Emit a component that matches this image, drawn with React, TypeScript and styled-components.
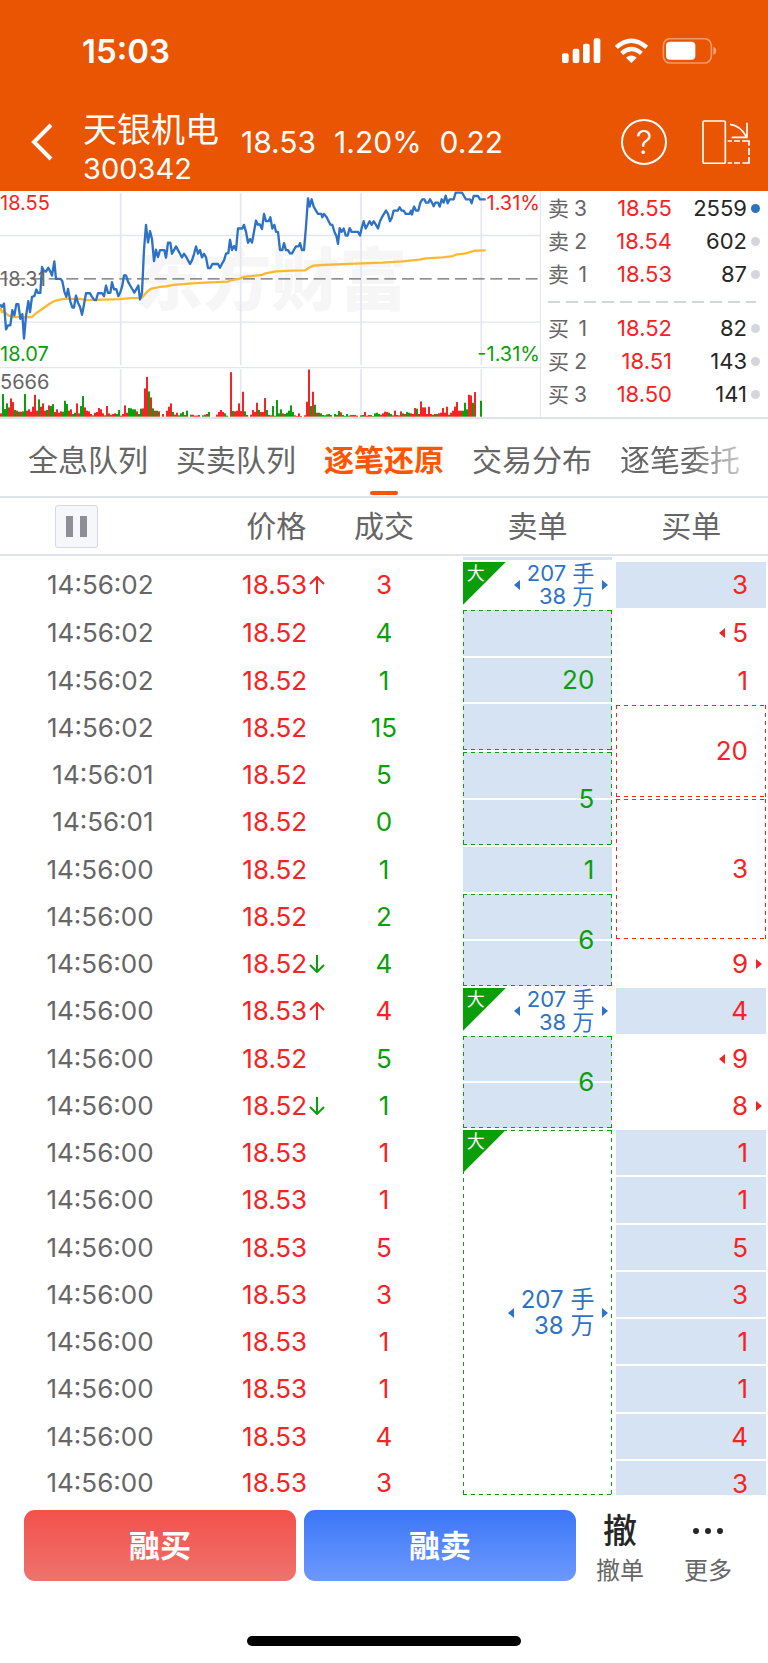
import React from "react";
import styled, { createGlobalStyle, css } from "styled-components";

const color = {
  brand: "#ea5504",
  active: "#ff5500",
  up: "#f52323",
  down: "#0a9f0a",
  blue: "#2d72c4",
  fill: "#d6e3f3",
  text: "#666666",
  dark: "#262626",
  line: "#e1e3ea",
};

const Global = createGlobalStyle`
  *, *::before, *::after { box-sizing: border-box; }
  body {
    margin: 0;
    background: #ffffff;
    color: ${color.text};
    font-family: Inter, "Noto Sans CJK SC", sans-serif;
  }
  button { font: inherit; color: inherit; background: none; border: 0; padding: 0; margin: 0; cursor: pointer; }
`;

const Page = styled.div`
  display: flex;
  flex-direction: column;
  min-height: 100vh;
`;

/* ---------- header ---------- */

const Header = styled.header`
  background: ${color.brand};
  color: #ffffff;
`;

const StatusBar = styled.div`
  display: flex;
  align-items: center;
  justify-content: space-between;
  height: 92px;
  padding: 10px 51px 0 82px;
  font-size: 33px;
  line-height: 40px;
  font-weight: 600;
`;

const NavBar = styled.nav`
  display: flex;
  align-items: center;
  height: 99px;
  padding: 0 18px 0 31px;
`;

const BackButton = styled.button`
  display: flex;
  width: 52px;
`;

const Title = styled.div`
  width: 158px;
  padding-top: 15px;
`;

const StockName = styled.h1`
  margin: 0;
  font-size: 34px;
  line-height: 40px;
  font-weight: 400;
`;

const StockCode = styled.div`
  font-size: 29px;
  line-height: 38px;
`;

const Quote = styled.div`
  display: flex;
  flex: 1;
  gap: 18px;
  font-size: 30px;
  line-height: 40px;
`;

const HelpButton = styled.button`
  width: 46px;
  height: 46px;
  margin-right: 35px;
  border: 2px solid #ffffff;
  border-radius: 50%;
  font-size: 33px;
  line-height: 40px;
  font-weight: 300;
`;

const LayoutButton = styled.button`
  display: flex;
`;

/* ---------- chart and order book ---------- */

const Market = styled.section`
  display: grid;
  grid-template-columns: minmax(0, 541fr) minmax(0, 227fr);
  border-bottom: 2px solid ${color.line};
`;

const ChartPane = styled.div`
  position: relative;
  height: 226px;
  svg { position: relative; display: block; width: 100%; height: 100%; }
`;

const Watermark = styled.span`
  position: absolute;
  left: 25%;
  top: 52px;
  font-size: 68px;
  line-height: 74px;
  font-weight: 900;
  color: #f6f6f6;
`;

const ChartLabel = styled.span<{ $top: number; $tone: string; $right?: boolean }>`
  position: absolute;
  top: ${(p) => p.$top}px;
  ${(p) => (p.$right ? "right: 1px;" : "left: 0;")}
  z-index: 1;
  font-size: 20px;
  line-height: 24px;
  color: ${(p) => p.$tone};
`;

const BookPane = styled.div`
  padding: 1px 8px 0 7px;
`;

const BookRow = styled.div`
  display: grid;
  grid-template-columns: 39px 1fr 75px 13px;
  align-items: center;
  height: 33px;
  font-size: 22px;
  line-height: 33px;
  text-align: right;
`;

const BookSide = styled.span`
  display: flex;
  justify-content: space-between;
  font-size: 21px;
`;

const BookPrice = styled.span`
  color: ${color.up};
`;

const BookVolume = styled.span`
  color: ${color.dark};
`;

const Dot = styled.i<{ $on?: boolean }>`
  justify-self: end;
  width: 9px;
  height: 9px;
  border-radius: 50%;
  background: ${(p) => (p.$on ? color.blue : "#d3d6dc")};
`;

const BookDivider = styled.div`
  display: flex;
  align-items: center;
  height: 21px;
  padding-right: 4px;
  &::before {
    content: "";
    flex: 1;
    height: 2px;
    background: repeating-linear-gradient(90deg, #d3d6dc 0 12px, transparent 12px 18px);
  }
`;

/* ---------- tabs ---------- */

const Tabs = styled.div`
  display: flex;
  gap: 28px;
  height: 79px;
  padding-left: 28px;
  border-bottom: 2px solid ${color.line};
  overflow: hidden;
`;

const Tab = styled.button<{ $active?: boolean; $fade?: boolean }>`
  position: relative;
  flex: none;
  font-size: 30px;
  line-height: 40px;
  white-space: nowrap;
  padding-top: 4px;
  ${(p) =>
    p.$active &&
    css`
      color: ${color.active};
      font-weight: 600;
      &::after {
        content: "";
        position: absolute;
        left: calc(50% - 14px);
        bottom: 1px;
        width: 28px;
        height: 4px;
        border-radius: 2px;
        background: ${color.active};
      }
    `}
  ${(p) =>
    p.$fade &&
    css`
      mask-image: linear-gradient(90deg, #000 55%, rgba(0, 0, 0, 0.35));
    `}
`;

/* ---------- tick table ---------- */

const Table = styled.table`
  width: 100%;
  table-layout: fixed;
  border-collapse: separate;
  border-spacing: 0;
  font-size: 26px;
  line-height: 26px;
`;

const Th = styled.th<{ $right?: boolean }>`
  height: 58px;
  padding: 0 1px;
  border-bottom: 2px solid ${color.line};
  font-size: 30px;
  line-height: 40px;
  font-weight: 400;
  text-align: ${(p) => (p.$right ? "right" : "center")};
`;

const PauseButton = styled.button`
  display: inline-flex;
  align-items: center;
  justify-content: center;
  gap: 7px;
  width: 43px;
  height: 43px;
  border: 1px solid #d6d9e1;
  border-radius: 3px;
  background: #f6f7fa;
  vertical-align: middle;
  &::before, &::after {
    content: "";
    width: 7px;
    height: 21px;
    background: #8e8e96;
  }
`;

const PeekRow = styled.tr`
  height: 5px;
  line-height: 0;
`;

const TickRow = styled.tr`
  height: 47px;
  &:nth-child(4n + 2), &:first-child { height: 48px; }
  &:last-child { height: 36px; line-height: 46px; }
  &:last-child > td { vertical-align: top; }
  &:last-child > td > div { height: 34px; }
`;

const Td = styled.td<{ $tone?: string; $align?: string }>`
  padding: 0;
  color: ${(p) => p.$tone ?? color.text};
  text-align: ${(p) => p.$align ?? "right"};
`;

const Anchor = styled.span`
  position: relative;
  display: inline-block;
`;

const Trend = styled.svg`
  position: absolute;
  left: calc(100% + 2px);
  top: 4px;
`;

type BoxStyle = { tone: string; filled?: boolean; dashed?: boolean; span: number };

const boxLayers = ({ tone, filled, dashed, span }: BoxStyle) => {
  const layers: string[] = [];
  if (dashed) {
    const across = `repeating-linear-gradient(90deg, ${tone} 0 4px, transparent 4px 8px)`;
    const down = `repeating-linear-gradient(${tone} 0 4px, transparent 4px 8px)`;
    layers.push(
      `${across} 0 0 / 100% 1px no-repeat`,
      `${across} 0 100% / 100% 1px no-repeat`,
      `${down} 0 0 / 1px 100% no-repeat`,
      `${down} 100% 0 / 1px 100% no-repeat`
    );
  }
  if (filled) {
    for (let k = 1; k < span; k++) {
      layers.push(`linear-gradient(#fff, #fff) 0 ${(100 * k) / span}% / 100% 2px no-repeat`);
    }
    layers.push(`linear-gradient(${color.fill}, ${color.fill})`);
  }
  return layers.length ? layers.join(", ") : "none";
};

const OrderTd = styled.td<{ $box: BoxStyle }>`
  position: relative;
  padding: 0 18px 0 0;
  border: solid transparent;
  border-width: 1px 2px;
  background: ${(p) => boxLayers(p.$box)};
  background-clip: padding-box;
  color: ${(p) => p.$box.tone};
  text-align: right;
`;

const BigFlag = styled.span`
  position: absolute;
  left: 0;
  top: 0;
  width: 43px;
  height: 43px;
  padding-left: 4px;
  background: ${color.down};
  clip-path: polygon(0 0, 100% 0, 0 100%);
  color: #ffffff;
  font-size: 18px;
  line-height: 24px;
  text-align: left;
`;

const BigOrder = styled(Anchor)<{ $large: boolean }>`
  color: ${color.blue};
  font-size: ${(p) => (p.$large ? 24 : 22)}px;
  line-height: ${(p) => (p.$large ? 26 : 23)}px;
  vertical-align: middle;
`;

const Pointer = styled.svg<{ $side: "left" | "right" }>`
  position: absolute;
  top: calc(50% - 5px);
  ${(p) => (p.$side === "left" ? "right: calc(100% + 7px);" : "left: calc(100% + 8px);")}
`;

/* ---------- footer ---------- */

const Footer = styled.footer`
  display: flex;
  flex-direction: column;
  flex: 1;
  justify-content: space-between;
  align-items: center;
  padding: 14px 0 17px;
`;

const Actions = styled.div`
  display: flex;
  width: 100%;
  height: 71px;
  padding: 0 16px 0 24px;
`;

const TradeButtons = styled.div`
  display: flex;
  flex: 1;
  gap: 8px;
`;

const TradeButton = styled.button<{ $from: string; $to: string }>`
  flex: 1;
  border-radius: 11px;
  background: linear-gradient(${(p) => p.$from}, ${(p) => p.$to});
  color: #ffffff;
  font-size: 31px;
  line-height: 40px;
  font-weight: 600;
`;

const ToolButton = styled.button`
  display: flex;
  flex-direction: column;
  align-items: center;
  justify-content: flex-start;
  width: 88px;
  font-size: 24px;
  line-height: 38px;
`;

const ToolIcon = styled.span`
  display: flex;
  flex: none;
  align-items: center;
  height: 42px;
  font-size: 34px;
  line-height: 42px;
  font-weight: 500;
  color: ${color.dark};
`;

const HomeBar = styled.div`
  width: 274px;
  height: 10px;
  border-radius: 5px;
  background: #000000;
`;

/* ---------- chart data, three units to a pixel ---------- */

const PRICE =
  "0,345 6,352 12,342 18,420 24,408 31,408 37,362 43,378 49,344 55,344 61,388 67,374 72,448 78,380 85,335 90,368 96,322 103,320 109,300 114,310 121,310 126,232 132,244 138,246 145,234 151,246 156,258 163,215 168,268 182,268 187,275 193,306 199,322 204,298 211,336 217,354 222,354 228,318 234,340 240,352 246,376 252,345 258,311 270,311 276,322 283,332 288,332 294,311 306,311 312,320 318,288 324,310 331,310 336,278 342,299 349,299 355,320 361,308 367,288 372,257 378,257 384,276 390,287 397,299 403,309 415,288 420,330 426,310 432,180 438,105 444,158 450,124 456,148 462,214 468,180 474,202 480,181 493,181 498,204 504,159 511,159 516,192 522,181 528,170 534,181 540,192 546,203 552,192 560,204 570,223 576,212 582,193 588,170 594,192 600,181 606,203 612,192 618,203 624,235 631,235 637,223 654,223 660,234 666,222 672,212 678,192 685,190 690,150 696,181 702,169 708,181 714,116 727,116 732,105 738,126 744,159 750,148 756,158 762,126 768,92 773,104 780,104 786,118 792,72 798,94 806,94 811,82 817,116 823,105 828,126 834,126 840,181 847,181 852,160 858,181 864,181 870,191 876,191 882,180 888,170 896,170 900,160 906,181 912,181 918,110 924,25 929,50 935,28 941,50 948,62 954,72 964,72 967,82 972,72 980,82 986,94 991,104 997,105 1004,128 1009,138 1014,162 1019,115 1025,126 1031,116 1037,137 1043,137 1049,115 1055,126 1074,126 1080,137 1085,115 1091,94 1097,116 1109,94 1115,105 1121,94 1128,105 1134,116 1140,94 1146,82 1158,62 1164,72 1170,94 1175,85 1181,62 1193,62 1199,52 1205,62 1211,62 1217,72 1229,72 1233,62 1236,74 1242,50 1248,62 1255,62 1261,38 1267,28 1273,28 1278,38 1285,38 1290,28 1296,38 1301,49 1306,38 1314,38 1319,50 1325,28 1331,38 1337,17 1343,40 1349,28 1361,28 1367,8 1386,8 1392,18 1398,28 1410,28 1415,40 1421,18 1434,18 1440,28 1457,28";

const AVERAGE =
  "0,352 6,368 12,366 25,378 40,383 95,383 105,374 120,363 150,342 165,334 190,328 240,328 260,332 360,329 390,326 425,325 440,308 452,298 480,292 500,290 520,286 600,280 685,276 692,272 720,267 730,262 768,258 786,256 793,252 828,245 878,243 916,242 925,235 940,228 968,226 1068,222 1148,219 1208,215 1258,210 1278,206 1328,203 1358,199 1368,195 1398,191 1423,183 1457,182";

const VOLUME = (
  "r10 g68 g23 g40 r28 r55 r44 g20 r18 g15 r15 g16 g68 r18 r22 r15 r30 r66 r18 g52 r30 r40 r18 g20 r34 g32 g38 r14 r22 r12 r16 g15 g48 g38 r18 r22 g8 g12 r40 r10 g32 g62 r28 r18 r16 r8 g4 r12 r14 r26 r22 r10 g4 r32 r10 g6 r8 r10 g8 g20 r3 r8 r34 r12 g26 g25 g22 g22 r16 g8 g24 r25 r85 r120 g76 r58 g25 r18 g18 r16 g0 r8 r0 r18 r30 r40 g14 r6 r12 g4 g10 g14 r5 g18 g0 g6 r6 r3 r3 r5 g0 g4 g6 r8 g14 g0 g0 g0 r6 r14 r20 r14 g10 g3 g0 r134 g17 r16 r18 r40 r17 r75 g16 r5 g0 r6 r20 r14 " +
  "r42 g20 r14 r14 r56 g20 r5 r4 g32 r3 g50 g10 g22 r10 g8 g12 g18 g34 g14 r4 r2 r10 r2 g0 r4 r45 r142 g32 r75 g36 r12 g12 g10 g5 g4 g7 g8 r5 g0 g8 r5 g17 r13 g5 g2 g8 g3 r5 r5 r5 r3 g0 g4 g5 r14 r3 r5 r5 g2 g10 g12 g8 r6 r10 r15 r14 g12 g8 r4 r18 r5 r4 r16 g10 r8 g14 g12 r10 r8 r26 g24 r8 r46 r28 r28 r8 r30 r8 g6 r8 g8 r10 r12 r26 r12 r30 g6 r12 r18 r30 r44 r18 r18 g18 g42 g22 r66 r64 g42 r74 g0 g0 g48"
)
  .split(" ")
  .map((bar) => ({ up: bar[0] === "r", size: Number(bar.slice(1)) }));

function Chart() {
  return (
    <ChartPane>
      <Watermark aria-hidden="true">东方财富</Watermark>
      <svg viewBox="0 3 1623 681" preserveAspectRatio="none" role="img" aria-label="分时走势">
        <g stroke="#e4e6ee" strokeWidth="5" fill="none">
          {[362, 722, 1083, 1444].map((x) => (
            <path key={x} d={`M${x} 9V528M${x} 540V684`} />
          ))}
          <path d="M0 137H1623M0 398H1623M0 535H1623M1622 3V684" strokeWidth="4" />
        </g>
        <path d="M0 268H1623" stroke="#6b6b6b" strokeWidth="4" strokeDasharray="36 17" strokeDashoffset="13" />
        <polyline points={AVERAGE} fill="none" stroke="#fdb833" strokeWidth="7" strokeLinejoin="round" />
        <polyline points={PRICE} fill="none" stroke="#2d72c4" strokeWidth="7" strokeLinejoin="round" />
        {VOLUME.map((bar, i) => (
          <rect
            key={i}
            x={i * 6}
            y={683 - bar.size}
            width="6"
            height={bar.size}
            fill={bar.up ? color.up : color.down}
          />
        ))}
      </svg>
      <ChartLabel $top={0} $tone={color.up}>18.55</ChartLabel>
      <ChartLabel $top={76} $tone={color.text}>18.31</ChartLabel>
      <ChartLabel $top={151} $tone={color.down}>18.07</ChartLabel>
      <ChartLabel $top={179} $tone={color.text}>5666</ChartLabel>
      <ChartLabel $top={0} $tone={color.up} $right>1.31%</ChartLabel>
      <ChartLabel $top={151} $tone={color.down} $right>-1.31%</ChartLabel>
    </ChartPane>
  );
}

const ASKS: [string, string, string, string][] = [
  ["卖", "3", "18.55", "2559"],
  ["卖", "2", "18.54", "602"],
  ["卖", "1", "18.53", "87"],
];
const BIDS: [string, string, string, string][] = [
  ["买", "1", "18.52", "82"],
  ["买", "2", "18.51", "143"],
  ["买", "3", "18.50", "141"],
];

function BookLine({ row, on }: { row: [string, string, string, string]; on?: boolean }) {
  const [side, level, price, volume] = row;
  return (
    <BookRow>
      <BookSide>
        <span>{side}</span>
        <span>{level}</span>
      </BookSide>
      <BookPrice>{price}</BookPrice>
      <BookVolume>{volume}</BookVolume>
      <Dot $on={on} />
    </BookRow>
  );
}

/* ---------- ticks ---------- */

type Order = {
  text?: string;
  span?: number;
  filled?: boolean;
  dashed?: boolean;
  big?: boolean;
  left?: boolean;
  right?: boolean;
};
type Tick = {
  time: string;
  price: string;
  trend?: "up" | "down";
  volume: string;
  side: "buy" | "sell";
  sell?: Order;
  buy?: Order;
};

const T2 = "14:56:02";
const T1 = "14:56:01";
const T0 = "14:56:00";
const whale: Order = { big: true, left: true, right: true };

const TICKS: Tick[] = [
  { time: T2, price: "18.53", trend: "up", volume: "3", side: "buy", sell: whale, buy: { text: "3", filled: true } },
  { time: T2, price: "18.52", volume: "4", side: "sell", sell: { text: "20", span: 3, filled: true, dashed: true }, buy: { text: "5", left: true } },
  { time: T2, price: "18.52", volume: "1", side: "sell", buy: { text: "1" } },
  { time: T2, price: "18.52", volume: "15", side: "sell", buy: { text: "20", span: 2, dashed: true } },
  { time: T1, price: "18.52", volume: "5", side: "sell", sell: { text: "5", span: 2, filled: true, dashed: true } },
  { time: T1, price: "18.52", volume: "0", side: "sell", buy: { text: "3", span: 3, dashed: true } },
  { time: T0, price: "18.52", volume: "1", side: "sell", sell: { text: "1", filled: true } },
  { time: T0, price: "18.52", volume: "2", side: "sell", sell: { text: "6", span: 2, filled: true, dashed: true } },
  { time: T0, price: "18.52", trend: "down", volume: "4", side: "sell", buy: { text: "9", right: true } },
  { time: T0, price: "18.53", trend: "up", volume: "4", side: "buy", sell: whale, buy: { text: "4", filled: true } },
  { time: T0, price: "18.52", volume: "5", side: "sell", sell: { text: "6", span: 2, filled: true, dashed: true }, buy: { text: "9", left: true } },
  { time: T0, price: "18.52", trend: "down", volume: "1", side: "sell", buy: { text: "8", right: true } },
  { time: T0, price: "18.53", volume: "1", side: "buy", sell: { ...whale, span: 8, dashed: true }, buy: { text: "1", filled: true } },
  ...["1", "5", "3", "1", "1", "4", "3"].map(
    (volume): Tick => ({ time: T0, price: "18.53", volume, side: "buy", buy: { text: volume, filled: true } })
  ),
];

function OrderCell({ order, tone }: { order: Order; tone: string }) {
  const span = order.span ?? 1;
  const arrowFill = order.big ? color.blue : color.up;
  const pointers = (
    <>
      {order.left && (
        <Pointer $side="left" width="6" height="10" viewBox="0 0 6 10" aria-hidden="true">
          <path d="M6 0V10L0 5Z" fill={arrowFill} />
        </Pointer>
      )}
      {order.right && (
        <Pointer $side="right" width="6" height="10" viewBox="0 0 6 10" aria-hidden="true">
          <path d="M0 0V10L6 5Z" fill={arrowFill} />
        </Pointer>
      )}
    </>
  );
  return (
    <OrderTd rowSpan={span > 1 ? span : undefined} $box={{ tone, filled: order.filled, dashed: order.dashed, span }}>
      {order.big && <BigFlag>大</BigFlag>}
      <div>
        {order.big ? (
          <BigOrder $large={span > 1}>
            207 手<br />
            38 万{pointers}
          </BigOrder>
        ) : (
          <Anchor>
            {order.text}
            {pointers}
          </Anchor>
        )}
      </div>
    </OrderTd>
  );
}

function TickLine({ tick }: { tick: Tick }) {
  return (
    <TickRow>
      <Td>
        <div>{tick.time}</div>
      </Td>
      <Td $tone={color.up}>
        <div>
          <Anchor>
            {tick.price}
            {tick.trend && (
              <Trend
                width="16"
                height="18"
                viewBox="0 0 16 18"
                fill="none"
                stroke={tick.trend === "up" ? color.up : color.down}
                strokeWidth="2"
                aria-hidden="true"
              >
                <path d={tick.trend === "up" ? "M8 18V1M1 8L8 1L15 8" : "M8 0V17M1 10L8 17L15 10"} />
              </Trend>
            )}
          </Anchor>
        </div>
      </Td>
      <Td $align="center" $tone={tick.side === "buy" ? color.up : color.down}>
        <div>{tick.volume}</div>
      </Td>
      {tick.sell && <OrderCell order={tick.sell} tone={color.down} />}
      {tick.buy && <OrderCell order={tick.buy} tone={color.up} />}
    </TickRow>
  );
}

/* ---------- page ---------- */

function StatusIcons() {
  return (
    <svg width="155" height="26" viewBox="35 25 465 78" fill="#fff" aria-hidden="true">
      <rect x="35" y="71" width="20" height="29" rx="6" />
      <rect x="67" y="57" width="20" height="43" rx="6" />
      <rect x="98" y="42" width="20" height="58" rx="6" />
      <rect x="130" y="26" width="20" height="74" rx="6" />
      <g fill="none" stroke="#fff" strokeWidth="13">
        <path d="M198 53Q243 13 289 53" />
        <path d="M214 71Q243 45 273 71" />
      </g>
      <path d="M227 84Q243 71 259 84L243 100Z" />
      <rect x="339" y="27" width="144" height="73" rx="20" fill="none" stroke="#fff" strokeOpacity="0.4" strokeWidth="5" />
      <rect x="347" y="36" width="88" height="54" rx="12" />
      <path d="M489 52Q498 55 498 63Q498 72 489 75Z" fillOpacity="0.45" />
    </svg>
  );
}

export default function App() {
  return (
    <Page>
      <Global />
      <Header>
        <StatusBar>
          <span>15:03</span>
          <StatusIcons />
        </StatusBar>
        <NavBar>
          <BackButton aria-label="返回">
            <svg width="22" height="38" viewBox="0 0 22 38" fill="none" stroke="#fff" strokeWidth="4" aria-hidden="true">
              <path d="M20 2L3 19L20 36" />
            </svg>
          </BackButton>
          <Title>
            <StockName>天银机电</StockName>
            <StockCode>300342</StockCode>
          </Title>
          <Quote>
            <span>18.53</span>
            <span>1.20%</span>
            <span>0.22</span>
          </Quote>
          <HelpButton aria-label="帮助">?</HelpButton>
          <LayoutButton aria-label="横屏">
            <svg width="48" height="44" viewBox="456 267 144 132" fill="none" stroke="#fff" strokeWidth="5" aria-hidden="true">
              <rect x="459" y="270" width="67" height="127" rx="4" />
              <path d="M540 280Q572 284 589 317M591 275V319H545" />
              <path d="M533 330H546M552 330H570M576 330H597V344M597 351V372M597 378V396H577M570 396H552M546 396H533" />
            </svg>
          </LayoutButton>
        </NavBar>
      </Header>

      <Market>
        <Chart />
        <BookPane>
          {ASKS.map((row, i) => (
            <BookLine key={row[1]} row={row} on={i === 0} />
          ))}
          <BookDivider />
          {BIDS.map((row) => (
            <BookLine key={row[1]} row={row} />
          ))}
        </BookPane>
      </Market>

      <Tabs>
        <Tab>全息队列</Tab>
        <Tab>买卖队列</Tab>
        <Tab $active>逐笔还原</Tab>
        <Tab>交易分布</Tab>
        <Tab $fade>逐笔委托</Tab>
      </Tabs>

      <Table>
        <thead>
          <tr>
            <Th>
              <PauseButton aria-label="暂停" />
            </Th>
            <Th $right>价格</Th>
            <Th>成交</Th>
            <Th>卖单</Th>
            <Th>买单</Th>
          </tr>
        </thead>
        <tbody aria-hidden="true">
          <PeekRow>
            <Td colSpan={3} />
            <OrderTd $box={{ tone: color.down, filled: true, span: 1 }} />
            <Td />
          </PeekRow>
        </tbody>
        <tbody>
          {TICKS.map((tick, i) => (
            <TickLine key={i} tick={tick} />
          ))}
        </tbody>
      </Table>

      <Footer>
        <Actions>
          <TradeButtons>
            <TradeButton $from="#f4504b" $to="#ee736d">融买</TradeButton>
            <TradeButton $from="#3b76f8" $to="#6d99fd">融卖</TradeButton>
          </TradeButtons>
          <ToolButton>
            <ToolIcon>撤</ToolIcon>
            撤单
          </ToolButton>
          <ToolButton>
            <ToolIcon>
              <svg width="30" height="6" viewBox="0 0 30 6" fill={color.dark} aria-hidden="true">
                <circle cx="3" cy="3" r="3" />
                <circle cx="15" cy="3" r="3" />
                <circle cx="27" cy="3" r="3" />
              </svg>
            </ToolIcon>
            更多
          </ToolButton>
        </Actions>
        <HomeBar />
      </Footer>
    </Page>
  );
}
